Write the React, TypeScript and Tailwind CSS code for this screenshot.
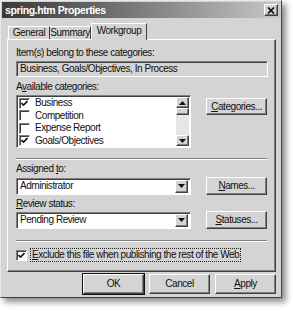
import React from "react";

const raised =
  "border border-t-white border-l-white border-r-[#404040] border-b-[#404040] shadow-[inset_-1px_-1px_0_#808080] bg-[#d4d4d4]";
const sunken =
  "border border-t-[#808080] border-l-[#808080] border-r-white border-b-white shadow-[inset_1px_1px_0_#404040]";

const Check = ({ on }: { on: boolean }) => (
  <div className={`w-[11px] h-[11px] shrink-0 bg-white flex items-center justify-center ${sunken}`}>
    {on && (
      <svg width="7" height="7" viewBox="0 0 7 7">
        <path d="M0.5 3 L2.5 5 L6.5 1" stroke="#111" strokeWidth="1.6" fill="none" />
      </svg>
    )}
  </div>
);

const Arrow = ({ up }: { up?: boolean }) => (
  <svg width="7" height="4" viewBox="0 0 7 4">
    <path d={up ? "M0 4 L3.5 0 L7 4 Z" : "M0 0 L7 0 L3.5 4 Z"} fill="#111" />
  </svg>
);

const Button = ({ children, className = "" }: { children: React.ReactNode; className?: string }) => (
  <div className={`flex items-center justify-center ${raised} ${className}`}>{children}</div>
);

const Combo = ({ value }: { value: string }) => (
  <div className={`w-[176px] h-[17px] bg-white flex items-center pl-[3px] pr-[2px] ${sunken}`}>
    <span className="flex-1">{value}</span>
    <div className={`w-[13px] h-[13px] flex items-center justify-center ${raised}`}>
      <Arrow />
    </div>
  </div>
);

export default function App() {
  const items: [string, boolean][] = [
    ["Business", true],
    ["Competition", false],
    ["Expense Report", false],
    ["Goals/Objectives", true],
  ];
  return (
    <div
      className="w-[293px] h-[311px] bg-white text-[10px] tracking-[-0.45px] text-[#111] leading-none"
      style={{ fontFamily: '"Liberation Sans", Arial, sans-serif' }}
    >
      <div className="w-[282px] h-[298px] flex flex-col border border-t-[#e8e8e8] border-l-[#e8e8e8] border-r-[#404040] border-b-[#404040] shadow-[4px_4px_6px_rgba(0,0,0,0.45)] bg-[#d4d4d4]">
        {/* title bar */}
        <div className="h-[16px] mx-[1px] mt-[1px] bg-gradient-to-r from-[#3a3a3a] to-[#c8c8c8] flex items-center justify-between pl-[3px] pr-[2px]">
          <span className="text-white font-bold text-[10.5px] tracking-[-0.4px]">spring.htm Properties</span>
          <div className={`w-[14px] h-[12px] flex items-center justify-center ${raised}`}>
            <svg width="8" height="7" viewBox="0 0 8 7">
              <path d="M1 0.5 L7 6.5 M7 0.5 L1 6.5" stroke="#111" strokeWidth="1.7" />
            </svg>
          </div>
        </div>

        {/* tabs */}
        <div className="flex items-end ml-[7px] mt-[4px] h-[17px]">
          <div className="h-[13px] w-[42px] flex items-center justify-center border-t border-l border-t-white border-l-white border-r border-r-[#404040]">
            General
          </div>
          <div className="h-[13px] w-[41px] flex items-center justify-center border-t border-t-white border-r border-r-[#404040]">
            Summary
          </div>
          <div className="h-[17px] w-[56px] flex items-center justify-center border-t border-l border-t-white border-l-white border-r border-r-[#404040] -mb-[1px] bg-[#d4d4d4] relative z-10 pb-[2px]">
            Workgroup
          </div>
        </div>

        {/* panel */}
        <div className="ml-[6px] w-[269px] h-[233px] border border-t-white border-l-white border-r-[#404040] border-b-[#404040] shadow-[inset_-1px_-1px_0_#808080] px-[8px] pt-[7px] flex flex-col">
          <div className="h-[12px] flex items-center">Item(s) belong to these categories:</div>
          <div className={`mt-[2px] w-[252px] h-[16px] flex items-center pl-[3px] ${sunken}`}>
            Business, Goals/Objectives, In Process
          </div>

          <div className="mt-[4px] h-[12px] flex items-center">
            <span>
              A<u>v</u>ailable categories:
            </span>
          </div>
          <div className="mt-[2px] flex items-start">
            <div className={`w-[176px] h-[53px] bg-white flex ${sunken}`}>
              <div className="flex-1 flex flex-col pt-[1px] pl-[2px]">
                {items.map(([label, on]) => (
                  <div key={label} className="h-[13px] flex items-center gap-[5px]">
                    <Check on={on} />
                    <span>{label}</span>
                  </div>
                ))}
              </div>
              <div className="w-[13px] flex flex-col bg-[#e6e6e6] mt-[1px] mb-[1px] mr-[1px]">
                <div className={`h-[11px] flex items-center justify-center ${raised}`}>
                  <Arrow up />
                </div>
                <div className={`h-[7px] ${raised}`} />
                <div className="flex-1" />
                <div className={`h-[11px] flex items-center justify-center ${raised}`}>
                  <Arrow />
                </div>
              </div>
            </div>
            <Button className="ml-[15px] mt-[3px] w-[61px] h-[17px]">
              <span>
                <u>C</u>ategories...
              </span>
            </Button>
          </div>

          <div className="mt-[10px] h-[2px] shrink-0 border-t border-t-[#808080] border-b border-b-white" />

          <div className="mt-[3px] h-[12px] flex items-center">
            <span>
              Assigned <u>t</u>o:
            </span>
          </div>
          <div className="mt-[2px] flex items-center">
            <Combo value="Administrator" />
            <Button className="ml-[15px] w-[61px] h-[18px]">
              <span>
                <u>N</u>ames...
              </span>
            </Button>
          </div>

          <div className="mt-[3px] h-[12px] flex items-center">
            <span>
              <u>R</u>eview status:
            </span>
          </div>
          <div className="mt-[1px] flex items-center">
            <Combo value="Pending Review" />
            <Button className="ml-[15px] w-[61px] h-[18px]">
              <span>
                <u>S</u>tatuses...
              </span>
            </Button>
          </div>

          <div className="mt-[11px] h-[2px] shrink-0 border-t border-t-[#808080] border-b border-b-white" />

          <div className="mt-[6px] flex items-center">
            <Check on />
            <span className="ml-[3px] px-[1px] py-[1px] border border-dotted border-[#222]">
              <u>E</u>xclude this file when publishing the rest of the Web
            </span>
          </div>
        </div>

        {/* bottom buttons */}
        <div className="flex justify-end gap-[5px] mt-[2px] mr-[5px]">
          <Button className="w-[61px] h-[20px] outline outline-1 outline-[#111]">OK</Button>
          <Button className="w-[61px] h-[20px]">Cancel</Button>
          <Button className="w-[61px] h-[20px]">
            <span>
              <u>A</u>pply
            </span>
          </Button>
        </div>
      </div>
    </div>
  );
}
